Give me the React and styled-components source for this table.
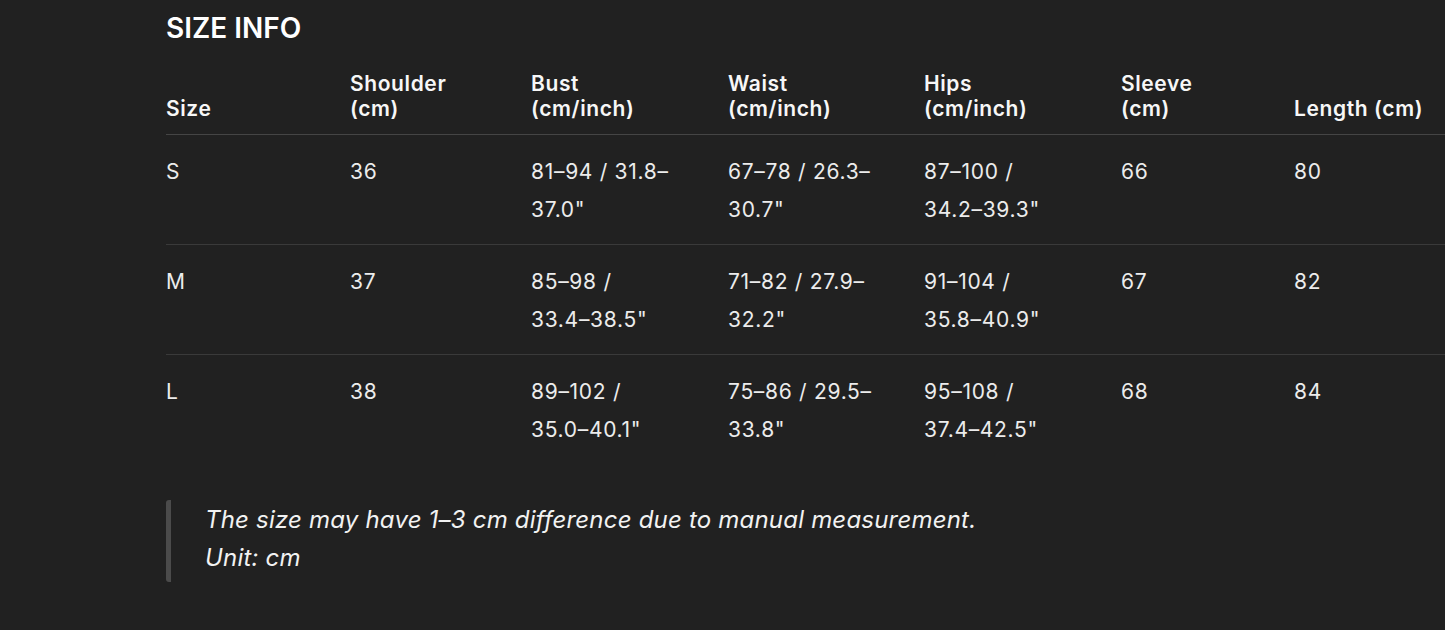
import React from "react";
import styled, { createGlobalStyle } from "styled-components";

const Global = createGlobalStyle`
  html, body { margin: 0; padding: 0; background: #212121; }
  body { overflow: hidden; font-family: Inter, "Noto Sans", "Liberation Sans", sans-serif; color: #f2f2f2; }
`;

const Page = styled.div`
  width: 1445px;
  height: 630px;
  box-sizing: border-box;
  padding: 11px 0 0 166px;
  background: #212121;
  overflow: hidden;
`;

const Title = styled.h2`
  margin: 0;
  font-size: 28px;
  line-height: 34px;
  font-weight: 600;
  color: #ffffff;
  letter-spacing: 0;
`;

const Table = styled.table`
  border-collapse: collapse;
  table-layout: fixed;
  width: 1328px;
  margin-top: 13px;
`;

const HeadCell = styled.th`
  text-align: left;
  vertical-align: bottom;
  font-size: 21px;
  line-height: 25px;
  font-weight: 600;
  letter-spacing: 0.6px;
  color: #f7f7f7;
  padding: 13px 0 13px 0;
  border-bottom: 1px solid #454545;
`;

const Cell = styled.td`
  vertical-align: top;
  font-size: 21px;
  line-height: 38px;
  font-weight: 400;
  letter-spacing: 0.7px;
  color: #ececec;
  padding: 18px 0 15px 0;
  border-bottom: ${(p) => (p.$last ? "none" : "1px solid #3a3a3a")};
`;

const Line = styled.span`
  display: block;
  white-space: nowrap;
`;

const Note = styled.blockquote`
  margin: 36px 0 0 0;
  padding: 1px 0 5px 34px;
  border-left: 5px solid #4b4b4b;
  border-radius: 3px;
  font-style: italic;
  font-size: 24px;
  line-height: 38px;
  letter-spacing: 0.2px;
  color: #f2f2f2;
`;

const widths = [184, 181, 197, 196, 197, 173, 200];

const headers = [
  ["Size"],
  ["Shoulder", "(cm)"],
  ["Bust", "(cm/inch)"],
  ["Waist", "(cm/inch)"],
  ["Hips", "(cm/inch)"],
  ["Sleeve", "(cm)"],
  ["Length (cm)"],
];

const rows = [
  [["S"], ["36"], ["81–94 / 31.8–", "37.0\""], ["67–78 / 26.3–", "30.7\""], ["87–100 /", "34.2–39.3\""], ["66"], ["80"]],
  [["M"], ["37"], ["85–98 /", "33.4–38.5\""], ["71–82 / 27.9–", "32.2\""], ["91–104 /", "35.8–40.9\""], ["67"], ["82"]],
  [["L"], ["38"], ["89–102 /", "35.0–40.1\""], ["75–86 / 29.5–", "33.8\""], ["95–108 /", "37.4–42.5\""], ["68"], ["84"]],
];

export default function App() {
  return (
    <>
      <Global />
      <Page>
        <Title>SIZE INFO</Title>
        <Table>
          <colgroup>
            {widths.map((w, i) => (
              <col key={i} style={{ width: w }} />
            ))}
          </colgroup>
          <thead>
            <tr>
              {headers.map((h, i) => (
                <HeadCell key={i}>
                  {h.map((l, j) => (
                    <Line key={j}>{l}</Line>
                  ))}
                </HeadCell>
              ))}
            </tr>
          </thead>
          <tbody>
            {rows.map((r, ri) => (
              <tr key={ri}>
                {r.map((c, ci) => (
                  <Cell key={ci} $last={ri === rows.length - 1}>
                    {c.map((l, j) => (
                      <Line key={j}>{l}</Line>
                    ))}
                  </Cell>
                ))}
              </tr>
            ))}
          </tbody>
        </Table>
        <Note>
          <Line>The size may have 1–3 cm difference due to manual measurement.</Line>
          <Line>Unit: cm</Line>
        </Note>
      </Page>
    </>
  );
}
